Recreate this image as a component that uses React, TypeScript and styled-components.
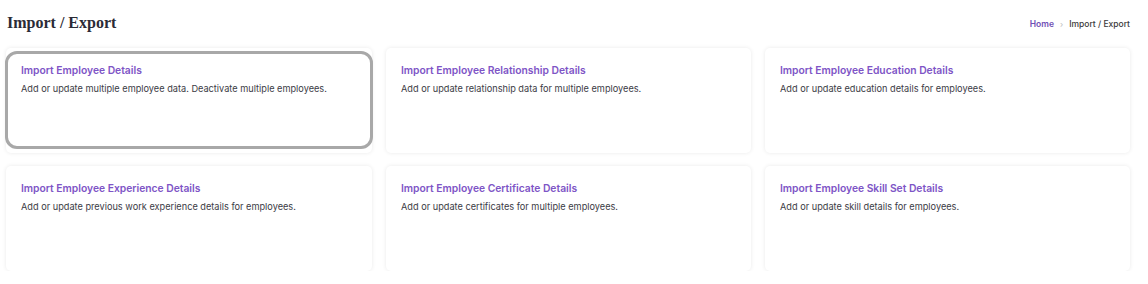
import React from "react";
import styled, { createGlobalStyle } from "styled-components";

const GlobalStyle = createGlobalStyle`
  html, body { margin: 0; padding: 0; background: #ffffff; }
  body { font-family: Inter, "Noto Sans", sans-serif; color: #333; }
  * { box-sizing: border-box; }
`;

const Page = styled.div`
  padding: 0 18px 0 6px;
`;

const Header = styled.div`
  height: 48px;
  display: flex;
  align-items: center;
  justify-content: space-between;
  padding: 0 0 2px 1px;
`;

const PageTitle = styled.h1`
  margin: 0;
  font-family: "Liberation Serif", "DejaVu Serif", serif;
  font-weight: 700;
  font-size: 16px;
  color: #2b2b36;
`;

const Crumbs = styled.nav`
  display: flex;
  align-items: center;
  gap: 6px;
  font-size: 8.5px;
  font-weight: 500;
  margin-top: 2px;
`;

const CrumbLink = styled.a`
  color: #6f4fb5;
  text-decoration: none;
  font-weight: 600;
`;

const CrumbSep = styled.span`
  color: #c4c4c4;
  font-size: 8px;
`;

const CrumbCurrent = styled.span`
  color: #3a3a3a;
`;

const Grid = styled.div`
  display: grid;
  grid-template-columns: 366px 365px 365px;
  column-gap: 14px;
  row-gap: 13px;
`;

const Card = styled.a<{ $focused?: boolean }>`
  position: relative;
  display: flex;
  flex-direction: column;
  gap: 6px;
  height: 105px;
  padding: 16px 15px;
  background: #fff;
  border-radius: 5px;
  box-shadow: 0 0 4px rgba(0, 0, 0, 0.09);
  text-decoration: none;
  &::after {
    content: "";
    display: ${(p) => (p.$focused ? "block" : "none")};
    position: absolute;
    top: 3px;
    bottom: 4px;
    left: -1px;
    right: -1px;
    border: 3px solid #a8a8a8;
    border-radius: 12px;
    pointer-events: none;
  }
`;

const CardTitle = styled.div`
  font-size: 10.3px;
  font-weight: 600;
  color: #7e55c6;
  line-height: 13px;
`;

const CardText = styled.div`
  font-size: 9.2px;
  color: #3b3b45;
  line-height: 12px;
`;

const items = [
  { t: "Import Employee Details", d: "Add or update multiple employee data. Deactivate multiple employees." },
  { t: "Import Employee Relationship Details", d: "Add or update relationship data for multiple employees." },
  { t: "Import Employee Education Details", d: "Add or update education details for employees." },
  { t: "Import Employee Experience Details", d: "Add or update previous work experience details for employees." },
  { t: "Import Employee Certificate Details", d: "Add or update certificates for multiple employees." },
  { t: "Import Employee Skill Set Details", d: "Add or update skill details for employees." },
];

export default function App() {
  return (
    <>
      <GlobalStyle />
      <Page>
        <Header>
          <PageTitle>Import / Export</PageTitle>
          <Crumbs>
            <CrumbLink href="#">Home</CrumbLink>
            <CrumbSep>›</CrumbSep>
            <CrumbCurrent>Import / Export</CrumbCurrent>
          </Crumbs>
        </Header>
        <Grid>
          {items.map((it, i) => (
            <Card key={it.t} href="#" $focused={i === 0}>
              <CardTitle>{it.t}</CardTitle>
              <CardText>{it.d}</CardText>
            </Card>
          ))}
        </Grid>
      </Page>
    </>
  );
}
